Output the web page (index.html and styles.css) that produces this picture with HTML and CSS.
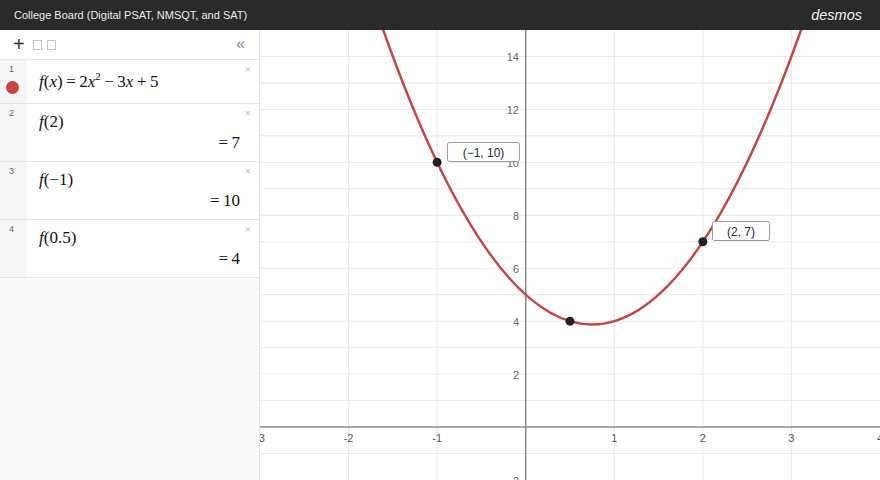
FILE: index.html
```html
<!DOCTYPE html>
<html>
<head>
<meta charset="utf-8">
<link rel="stylesheet" href="styles.css">
</head>
<body>
<div class="topbar">
  <span class="title">College Board (Digital PSAT, NMSQT, and SAT)</span>
  <span class="brand">desmos</span>
</div>
<div class="main">
  <div class="panel">
    <div class="panel-head">
      <span class="plus">+</span>
      <span class="sq"></span>
      <span class="sq"></span>
      <span class="spacer"></span>
      <span class="collapse">«</span>
    </div>
    <div class="expr">
      <div class="gutter"><span class="num">1</span><span class="dot"></span></div>
      <div class="content first">
        <div class="math"><i>f</i>(<i>x</i>)<span class="op">=</span>2<i>x</i><sup>2</sup><span class="op">−</span>3<i>x</i><span class="op">+</span>5</div>
        <span class="del">×</span>
      </div>
    </div>
    <div class="expr">
      <div class="gutter"><span class="num">2</span></div>
      <div class="content">
        <div class="math"><i>f</i>(2)</div>
        <div class="result"><span class="op">=</span>7</div>
        <span class="del">×</span>
      </div>
    </div>
    <div class="expr">
      <div class="gutter"><span class="num">3</span></div>
      <div class="content">
        <div class="math"><i>f</i>(−1)</div>
        <div class="result"><span class="op">=</span>10</div>
        <span class="del">×</span>
      </div>
    </div>
    <div class="expr">
      <div class="gutter"><span class="num">4</span></div>
      <div class="content">
        <div class="math"><i>f</i>(0.5)</div>
        <div class="result"><span class="op">=</span>4</div>
        <span class="del">×</span>
      </div>
    </div>
    <div class="panel-rest"></div>
  </div>
  <div class="graph">
    <svg class="plot" width="620" height="450" viewBox="0 0 620 450">
      <g class="grid">
        <line x1="88.57" y1="0" x2="88.57" y2="450"/>
        <line x1="177.14" y1="0" x2="177.14" y2="450"/>
        <line x1="354.29" y1="0" x2="354.29" y2="450"/>
        <line x1="442.86" y1="0" x2="442.86" y2="450"/>
        <line x1="531.43" y1="0" x2="531.43" y2="450"/>
        <line x1="0" y1="423.53" x2="620" y2="423.53"/>
        <line x1="0" y1="370.59" x2="620" y2="370.59"/>
        <line x1="0" y1="344.12" x2="620" y2="344.12"/>
        <line x1="0" y1="317.65" x2="620" y2="317.65"/>
        <line x1="0" y1="291.18" x2="620" y2="291.18"/>
        <line x1="0" y1="264.71" x2="620" y2="264.71"/>
        <line x1="0" y1="238.24" x2="620" y2="238.24"/>
        <line x1="0" y1="211.76" x2="620" y2="211.76"/>
        <line x1="0" y1="185.29" x2="620" y2="185.29"/>
        <line x1="0" y1="158.82" x2="620" y2="158.82"/>
        <line x1="0" y1="132.35" x2="620" y2="132.35"/>
        <line x1="0" y1="105.88" x2="620" y2="105.88"/>
        <line x1="0" y1="79.41" x2="620" y2="79.41"/>
        <line x1="0" y1="52.94" x2="620" y2="52.94"/>
        <line x1="0" y1="26.47" x2="620" y2="26.47"/>
      </g>
      <g class="axes">
        <line x1="0" y1="397.06" x2="620" y2="397.06"/>
        <line x1="265.71" y1="0" x2="265.71" y2="450"/>
      </g>
      <g class="ylab">
        <text x="259" y="31">14</text>
        <text x="259" y="84">12</text>
        <text x="259" y="137">10</text>
        <text x="259" y="190">8</text>
        <text x="259" y="243">6</text>
        <text x="259" y="296">4</text>
        <text x="259" y="349">2</text>
        <text x="259" y="455">-2</text>
      </g>
      <g class="xlab">
        <text x="0" y="412">-3</text>
        <text x="88.57" y="412">-2</text>
        <text x="177.14" y="412">-1</text>
        <text x="354.29" y="412">1</text>
        <text x="442.86" y="412">2</text>
        <text x="531.43" y="412">3</text>
        <text x="620" y="412">4</text>
      </g>
      <path class="curve" d="M106.29,-49.75 Q332.14,638.73 558,-49.75"/>
      <circle class="pt" cx="177.14" cy="132.35" r="4.5"/>
      <circle class="pt" cx="442.86" cy="211.76" r="4.5"/>
      <circle class="pt" cx="310" cy="291.18" r="4.5"/>
      <g class="tag">
        <rect x="187.5" y="112.5" width="72" height="19" rx="2"/>
        <text x="223.5" y="126.5">(−1, 10)</text>
        <rect x="452.5" y="191.5" width="57" height="19" rx="2"/>
        <text x="481" y="205.5">(2, 7)</text>
      </g>
    </svg>
  </div>
</div>
</body>
</html>
```

FILE: styles.css
```css
html, body {
  margin: 0;
  padding: 0;
  width: 880px;
  height: 480px;
  overflow: hidden;
  font-family: "Liberation Sans", Arial, sans-serif;
  background: #ffffff;
}

.topbar {
  height: 30px;
  background: #2a2a2a;
  display: flex;
  align-items: center;
  justify-content: space-between;
  padding: 0 18px 0 14px;
  box-sizing: border-box;
}

.title {
  color: #ececec;
  font-size: 11px;
}

.brand {
  color: #f0f0f0;
  font-size: 14.5px;
  font-style: italic;
}

.main {
  display: flex;
  height: 450px;
}

.panel {
  width: 260px;
  flex: none;
  display: flex;
  flex-direction: column;
  background: #f9f9f9;
  border-right: 1px solid #e6e6e6;
  box-sizing: border-box;
}

.panel-head {
  height: 30px;
  box-sizing: border-box;
  background: #ffffff;
  border-bottom: 1px solid #e6e6e6;
  display: flex;
  align-items: center;
  padding: 0 14px 0 13px;
}

.plus {
  font-size: 20px;
  color: #333;
  line-height: 20px;
  margin-right: 8px;
  margin-top: -2px;
}

.sq {
  width: 7px;
  height: 8px;
  border: 1px solid #c4c4c4;
  margin-right: 5px;
}

.spacer {
  flex: 1;
}

.collapse {
  font-size: 16px;
  color: #7d8aa6;
  line-height: 16px;
  margin-top: -2px;
}

.expr {
  display: flex;
  background: #ffffff;
  border-bottom: 1px solid #e6e6e6;
}

.gutter {
  width: 26px;
  flex: none;
  background: #f6f6f6;
  border-right: 1px solid #ececec;
  display: flex;
  flex-direction: column;
  align-items: center;
  padding-top: 4px;
  box-sizing: border-box;
}

.num {
  font-size: 9px;
  line-height: 10px;
  color: #666;
  margin-left: -2px;
}

.dot {
  width: 13px;
  height: 13px;
  border-radius: 50%;
  background: #c74440;
  margin-top: 7px;
}

.content {
  flex: 1;
  position: relative;
  padding: 8px 19px 8px 13px;
  font-family: "Liberation Serif", "Times New Roman", serif;
  font-size: 17px;
  color: #111;
}

.content.first {
  padding-top: 12px;
  padding-bottom: 11px;
}

.math, .result {
  line-height: 20px;
  height: 20px;
  white-space: nowrap;
}

.result {
  text-align: right;
  margin-top: 1px;
}

.op {
  margin: 0 3.5px;
}

sup {
  font-size: 11px;
  line-height: 0;
  vertical-align: 7px;
}

.del {
  position: absolute;
  top: 3px;
  right: 8px;
  font-family: "Liberation Sans", Arial, sans-serif;
  font-size: 11px;
  color: #c2c2c2;
}

.panel-rest {
  flex: 1;
}

.graph {
  flex: 1;
  overflow: hidden;
}

.plot {
  display: block;
}

.grid line {
  stroke: #e8e8e8;
  stroke-width: 1;
}

.axes line {
  stroke: #8a8a8a;
  stroke-width: 1.5;
}

.ylab text {
  font-size: 11px;
  fill: #666;
  text-anchor: end;
  font-family: "Liberation Sans", Arial, sans-serif;
}

.xlab text {
  font-size: 11px;
  fill: #555;
  text-anchor: middle;
  font-family: "Liberation Sans", Arial, sans-serif;
}

.curve {
  fill: none;
  stroke: #c74440;
  stroke-width: 2.5;
}

.pt {
  fill: #222;
}

.tag rect {
  fill: #ffffff;
  stroke: #9a9a9a;
  stroke-width: 1;
}

.tag text {
  font-size: 12px;
  fill: #1c2640;
  text-anchor: middle;
  font-family: "Liberation Sans", Arial, sans-serif;
}
```
